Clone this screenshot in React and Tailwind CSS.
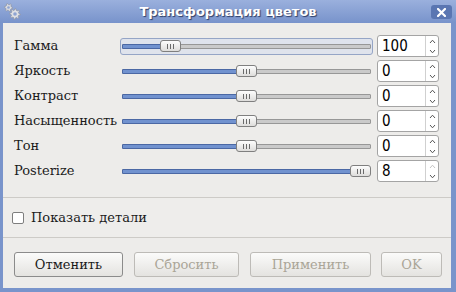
import React from "react";

const serif = { fontFamily: '"DejaVu Serif", serif' };

function Gears() {
  const gear = (cx, cy, r, teeth) => {
    const pts = [];
    const n = teeth * 2;
    for (let i = 0; i < n * 2; i++) {
      const a = (i / (n * 2)) * Math.PI * 2;
      const rr = Math.floor(i / 2) % 2 === 0 ? r : r * 0.72;
      pts.push(`${(cx + rr * Math.cos(a)).toFixed(2)},${(cy + rr * Math.sin(a)).toFixed(2)}`);
    }
    return pts.join(" ");
  };
  return (
    <svg width="17" height="17" viewBox="0 0 17 17">
      <polygon points={gear(4.5, 4.5, 4, 6)} fill="#d9dbe0" stroke="#8e96a8" strokeWidth="0.8" />
      <circle cx="4.5" cy="4.5" r="1.3" fill="#8ea4d2" />
      <polygon points={gear(11, 11, 5.3, 8)} fill="#dfe1e5" stroke="#8e96a8" strokeWidth="0.8" />
      <circle cx="11" cy="11" r="1.8" fill="#8ea4d2" />
    </svg>
  );
}

function Slider({ pos, focused }) {
  return (
    <div
      className={
        "relative w-[253px] h-[17px] rounded-[3px] " +
        (focused ? "bg-[#dfe3ec] border border-[#95a5c6]" : "")
      }
    >
      <div
        className={
          "absolute h-[5px] w-[249px] rounded-[1px] bg-[#cacaca] border border-[#979797] " +
          (focused ? "left-[1px] top-[5px]" : "left-[2px] top-[6px]")
        }
      />
      <div
        className={
          "absolute h-[5px] rounded-[1px] bg-[#7192cf] border border-[#4b68a4] " +
          (focused ? "left-[1px] top-[5px]" : "left-[2px] top-[6px]")
        }
        style={{ width: pos - 2 + 4 }}
      />
      <div
        className={
          "absolute w-[21px] h-[12px] rounded-[3px] border border-[#7f7f7f] bg-gradient-to-b from-[#fdfdfd] to-[#dedddb] flex items-center justify-center gap-[2px] " +
          (focused ? "top-[1.5px]" : "top-[2.5px]")
        }
        style={{ left: focused ? pos - 1 : pos }}
      >
        <div className="w-px h-[5px] bg-[#6a6a6a]" />
        <div className="w-px h-[5px] bg-[#6a6a6a]" />
        <div className="w-px h-[5px] bg-[#6a6a6a]" />
      </div>
    </div>
  );
}

function Spin({ value, upDisabled }) {
  return (
    <div className="w-[62px] h-[22px] rounded-[3px] border border-[#a4a4a4] bg-white flex">
      <div
        className="flex-1 flex items-center pl-[4px] text-[15px] text-black leading-none"
        style={{ fontFamily: '"DejaVu Sans Condensed", "DejaVu Sans", sans-serif' }}
      >
        {value}
      </div>
      <div className="w-[13px] border-l border-[#d0d0d0] flex flex-col">
        <div className="flex-1 flex items-center justify-center">
          <svg width="7" height="5" viewBox="0 0 7 5">
            <polyline points="1,4 3.5,1.2 6,4" fill="none" stroke={upDisabled ? "#c4c4c4" : "#555"} strokeWidth="1" />
          </svg>
        </div>
        <div className="flex-1 flex items-center justify-center">
          <svg width="7" height="5" viewBox="0 0 7 5">
            <polyline points="1,1 3.5,3.8 6,1" fill="none" stroke="#555" strokeWidth="1" />
          </svg>
        </div>
      </div>
    </div>
  );
}

function Row({ label, pos, focused, value, upDisabled }) {
  return (
    <div className="h-[22px] flex items-center">
      <div className="w-[106px] text-[13px] text-[#1b1b1b] whitespace-nowrap" style={serif}>
        {label}
      </div>
      <Slider pos={pos} focused={focused} />
      <div className="w-[4px]" />
      <Spin value={value} upDisabled={upDisabled} />
    </div>
  );
}

function Btn({ w, children, disabled }) {
  return (
    <div
      className={
        "h-[25px] rounded-[3px] border bg-gradient-to-b from-[#fbfbfa] to-[#e4e3e0] flex items-center justify-center text-[13px] " +
        (disabled ? "border-[#bdbbb7] text-[#aaa597]" : "border-[#8b8b8b] text-[#1b1b1b]")
      }
      style={{ width: w, ...serif }}
    >
      {children}
    </div>
  );
}

export default function App() {
  return (
    <div className="w-[456px] h-[292px] bg-[#7994cb] flex flex-col overflow-hidden">
      <div className="h-[23px] relative flex items-center justify-center bg-gradient-to-b from-[#9ab0dd] to-[#7893cb]">
        <div className="absolute left-[4px] top-[3px]">
          <Gears />
        </div>
        <div
          className="text-white font-bold text-[13px] [text-shadow:1px_1px_1px_#2e3d66]"
          style={{ fontFamily: '"DejaVu Sans", sans-serif' }}
        >
          Трансформация цветов
        </div>
        <div className="absolute left-[431px] top-[5px] w-[21px] h-[14px] rounded-[3px] bg-[#5a76b2] flex items-center justify-center">
          <svg width="9" height="9" viewBox="0 0 9 9">
            <path d="M1 1 L8 8 M8 1 L1 8" stroke="white" strokeWidth="2.2" strokeLinecap="square" />
          </svg>
        </div>
      </div>
      <div className="flex-1 ml-[3px] mr-[5px] mb-[4px] bg-[#edecea] flex flex-col">
        <div className="pt-[12px] pl-[11px] flex flex-col gap-[3px]">
          <Row label="Гамма" pos={40} focused value="100" />
          <Row label="Яркость" pos={116} value="0" />
          <Row label="Контраст" pos={116} value="0" />
          <Row label="Насыщенность" pos={116} value="0" />
          <Row label="Тон" pos={116} value="0" />
          <Row label="Posterize" pos={230} value="8" upDisabled />
        </div>
        <div className="mt-[15px] h-px bg-[#cdcbc7]" />
        <div className="h-[39px] flex items-center pl-[9px] bg-[#eeedeb]">
          <div className="w-[12px] h-[12px] rounded-[2px] border border-[#7e7e7e] bg-white" />
          <div className="ml-[7px] text-[13px] text-[#1b1b1b]" style={serif}>
            Показать детали
          </div>
        </div>
        <div className="h-px bg-[#cdcbc7]" />
        <div className="mt-[14px] pl-[11px] flex">
          <Btn w={109}>Отменить</Btn>
          <div className="w-[11px]" />
          <Btn w={105} disabled>Сбросить</Btn>
          <div className="w-[11px]" />
          <Btn w={121} disabled>Применить</Btn>
          <div className="w-[10px]" />
          <Btn w={61} disabled>OK</Btn>
        </div>
      </div>
    </div>
  );
}
